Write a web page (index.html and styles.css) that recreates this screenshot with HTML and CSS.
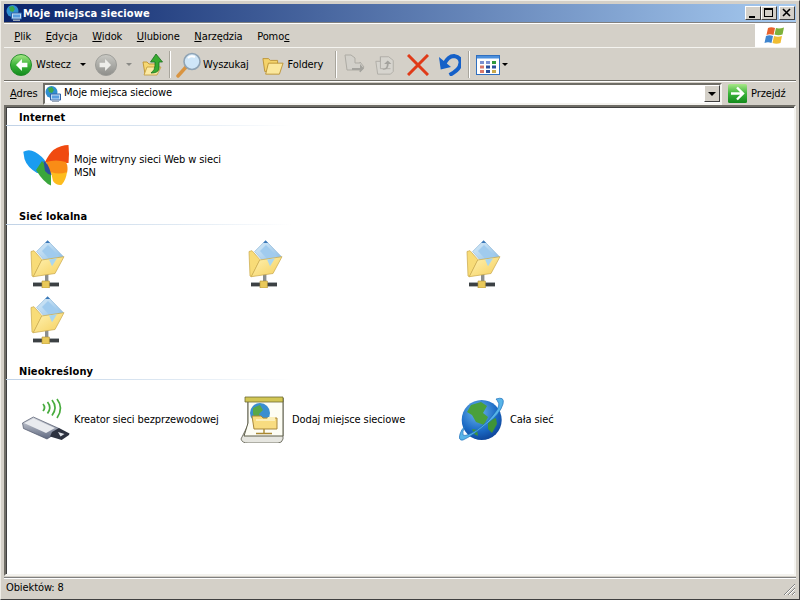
FILE: index.html
```html
<!DOCTYPE html>
<html lang="pl">
<head>
<meta charset="utf-8">
<title>Moje miejsca sieciowe</title>
<link rel="stylesheet" href="styles.css">
</head>
<body>
<svg class="defs" width="0" height="0" aria-hidden="true">
  <defs>
    <linearGradient id="gGreen" x1="0" y1="0" x2="0" y2="1"><stop offset="0" stop-color="#a8e888"/><stop offset="0.5" stop-color="#3cb43a"/><stop offset="1" stop-color="#128a1c"/></linearGradient>
    <linearGradient id="gGray" x1="0" y1="0" x2="0" y2="1"><stop offset="0" stop-color="#c9c9c4"/><stop offset="1" stop-color="#8e8e8a"/></linearGradient>
    <linearGradient id="gYel" x1="0" y1="0" x2="1" y2="1"><stop offset="0" stop-color="#fff3b4"/><stop offset="1" stop-color="#f5cf5c"/></linearGradient>
    <linearGradient id="gBlueDoc" x1="0" y1="0" x2="1" y2="1"><stop offset="0" stop-color="#dcedf9"/><stop offset="1" stop-color="#82b8e4"/></linearGradient>
    <radialGradient id="gGlobe" cx="0.4" cy="0.3" r="0.8"><stop offset="0" stop-color="#6fb8ee"/><stop offset="0.6" stop-color="#1a69c4"/><stop offset="1" stop-color="#0b3a8c"/></radialGradient>
    <linearGradient id="gUsb" x1="0" y1="0" x2="0" y2="1"><stop offset="0" stop-color="#d5d8de"/><stop offset="1" stop-color="#5f6880"/></linearGradient>
    <symbol id="netFolder" viewBox="0 0 48 48">
      <path d="M23 32h3.400v10H23z" fill="#8b8f90"/>
      <path d="M11 43h26v3.400H11z" fill="#3c4144"/>
      <path d="M11 42.500h26" stroke="#a8adb0" fill="none"/>
      <path d="M20 41h7.400v7H20z" fill="#e9c95a" stroke="#b0923a" stroke-width=".6"/>
      <path d="M9 11.500l3-.8 8 9-8.700 17L10 36z" fill="#f8dc78" stroke="#c9a84a" stroke-width=".7"/>
      <path d="M25.600 .5 41.300 16.600 28 26.600 14.600 11.600z" fill="url(#gBlueDoc)" stroke="#8fb8d8" stroke-width=".7"/>
      <path d="M25.600 .5l2.600 2.500h-5z" fill="#3c78b8"/>
      <path d="M20 11l6-6 11 11-7 6z" fill="#a0cbee"/>
      <path d="M11.300 36.700 33 33.500 42 16.700 19.700 20z" fill="url(#gYel)" stroke="#c9a84a" stroke-width=".7"/>
      <path d="M27 19.500l8-1.200-5 8z" fill="#a9d6ef"/>
    </symbol>
    <symbol id="netGlobe" viewBox="0 0 16 16">
      <circle cx="6.500" cy="6" r="6" fill="#2f8fd0"/>
      <path d="M3 2l4-1 2 3-2 3-3-1z" fill="#3fa84a"/>
      <path d="M5.500 8h10v6h-10z" fill="#c4def4" stroke="#2f62a8"/>
      <path d="M7 9.500h7v3H7z" fill="#5a9ee0"/>
      <path d="M7 14.500h7V16H7z" fill="#9aa8b8"/>
    </symbol>
  </defs>
</svg>
<div class="window">
  <header class="titlebar">
    <svg class="ico16"><use href="#netGlobe"/></svg>
    <span class="title-text">Moje miejsca sieciowe</span>
    <div class="caption-buttons">
      <span class="cap-btn"><svg viewBox="0 0 14 12" width="14" height="12"><path d="M3 9h6v2H3z"/></svg></span>
      <span class="cap-btn"><svg viewBox="0 0 14 12" width="14" height="12"><path d="M2 1h9v9H2zM3 3v6h7V3z" fill-rule="evenodd"/></svg></span>
      <span class="cap-btn cap-close"><svg viewBox="0 0 14 12" width="14" height="12"><path d="M3 2l7 7M10 2 3 9" stroke="#000" stroke-width="1.600" fill="none"/></svg></span>
    </div>
  </header>
  <div class="menubar">
    <nav class="menu">
      <span class="menu-item"><u>P</u>lik</span>
      <span class="menu-item"><u>E</u>dycja</span>
      <span class="menu-item"><u>W</u>idok</span>
      <span class="menu-item"><u>U</u>lubione</span>
      <span class="menu-item"><u>N</u>arzędzia</span>
      <span class="menu-item">Pomo<u>c</u></span>
    </nav>
    <div class="brand">
      <svg width="22" height="20" viewBox="0 0 22 20"><path d="M4 2q3-1.500 7 0l-1.500 7q-3.500-1.500-7 0z" fill="#e8622c"/><path d="M12 2q3 1.200 8-.5L18.500 8.500q-4 1.500-8 0z" fill="#7cb13a"/><path d="M2 10q3.500-1.500 7 0L7.500 17q-3.500-1.500-7 0z" fill="#3f85cf"/><path d="M10 10q4 1.500 8 0l-1.500 7q-4 1.500-8 0z" fill="#f0bd32"/></svg>
    </div>
  </div>
  <div class="toolbar">
    <svg class="tb-round" viewBox="0 0 24 24"><circle cx="12" cy="12" r="11.500" fill="url(#gGreen)" stroke="#1c8a24"/><path d="M13 5.500 6.500 12l6.500 6.500v-4h6v-5h-6z" fill="#fff"/></svg>
    <span class="tb-label lbl-back">Wstecz</span>
    <span class="caret caret-back"></span>
    <svg class="tb-round tb-forward" viewBox="0 0 24 24"><circle cx="12" cy="12" r="11.500" fill="url(#gGray)" stroke="#9a9a96"/><path d="M11 5.500 17.500 12 11 18.500v-4H5v-5h6z" fill="#eeeeea"/></svg>
    <span class="caret caret-fwd"></span>
    <svg class="tb-ico tb-up" viewBox="0 0 22 22"><path d="M1 8h4l2 2h7v10H3z" fill="#f6d873" stroke="#c29a3b"/><path d="M2 21l3-8h14l-4 8z" fill="#fbe9a4" stroke="#c29a3b" stroke-width=".8"/><path d="M14 0l6.500 8H17v7q-1 4-8 4 4-3 4-7V8H8.500z" fill="#38ab30" stroke="#17701c" stroke-width=".8"/></svg>
    <span class="tb-sep sep-a"></span>
    <svg class="tb-search" viewBox="0 0 26 26"><path d="M2 24l8-9" stroke="#d99440" stroke-width="3.400" stroke-linecap="round"/><circle cx="16" cy="9.500" r="8" fill="#cfe6f8" stroke="#8fa3b4" stroke-width="1.600"/><path d="M12 6q3-3 7-1" stroke="#fff" stroke-width="2" fill="none"/></svg>
    <span class="tb-label lbl-search">Wyszukaj</span>
    <svg class="tb-ico tb-folders" viewBox="0 0 24 24"><path d="M1 5h6l2 2h8v12H3z" fill="#f4d36b" stroke="#bb9336"/><path d="M4 22 7 10h16l-4 12z" fill="#fbe79c" stroke="#bb9336"/></svg>
    <span class="tb-label lbl-folders">Foldery</span>
    <span class="tb-sep sep-b"></span>
    <svg class="tb-ico tb-move" viewBox="0 0 22 22"><path d="M2 1h6l4 3v5h5v-1l4 5-4 5v-2H4z" fill="#d2d0ca" stroke="#adaba4"/><path d="M9 14h8v-4l4 4.500-4 4v-2.500H9z" fill="#a4a39e"/></svg>
    <svg class="tb-ico tb-copy" viewBox="0 0 24 24"><path d="M2 8h5V3h9l5 4v12l-3 3H4z" fill="#d6d4ce" stroke="#aeaca5"/><path d="M7 3v13h11" fill="none" stroke="#aeaca5"/><path d="M9 17c4-1 5-3 5-6h-3l4-4 4 4h-3q0 7-7 6z" fill="#a4a39e"/></svg>
    <svg class="tb-ico tb-del" viewBox="0 0 22 22"><path d="M1 1l20 20M21 1 1 21" stroke="#e03a18" stroke-width="3" fill="none"/></svg>
    <svg class="tb-ico tb-undo" viewBox="0 0 22 22"><path d="M5 10.500Q9 2 15 2q7 1 6.500 7-.5 7-11 12" fill="none" stroke="#1560c8" stroke-width="4"/><path d="M0 3l1.700 12.500L12 13z" fill="#1560c8"/></svg>
    <span class="tb-sep sep-c"></span>
    <svg class="tb-views" viewBox="0 0 24 20"><rect x=".5" y=".5" width="23" height="19" fill="#fff" stroke="#2f6fc0"/><path d="M1 1h22v2.500H1z" fill="#4c8fdc"/><path d="M4 6h4v3H4z" fill="#7b8fd0"/><path d="M10 6h4v3h-4z" fill="#7b8fd0"/><path d="M16 6h4v3h-4z" fill="#2f9a3c"/><path d="M4 10.500h4v3H4z" fill="#d9776a"/><path d="M10 10.500h4v3h-4z" fill="#2a4f9c"/><path d="M16 10.500h4v3h-4z" fill="#2a4f9c"/><path d="M4 15h4v3H4z" fill="#d9776a"/><path d="M10 15h4v3h-4z" fill="#2a4f9c"/><path d="M16 15h4v3h-4z" fill="#c9a84a"/></svg>
    <span class="caret caret-views"></span>
  </div>
  <div class="addressbar">
    <span class="addr-label"><u>A</u>dres</span>
    <div class="combo">
      <svg class="ico16"><use href="#netGlobe"/></svg>
      <span class="combo-text">Moje miejsca sieciowe</span>
      <span class="combo-btn"><span class="caret caret-combo"></span></span>
    </div>
    <svg class="go-ico" viewBox="0 0 19 19"><rect width="19" height="19" rx="1.500" fill="url(#gGreen)"/><path d="M9 3.500 15 9.500 9 15.500M3 9.500h11" stroke="#fff" stroke-width="2.400" fill="none"/></svg>
    <span class="go-label">Przejdź</span>
  </div>
  <main class="content">
    <section class="group group-first">
      <h2 class="group-head">Internet</h2>
      <div class="items">
        <div class="item">
          <svg class="big" viewBox="0 0 48 48"><path d="M1.300 9.700Q7 6.500 13 10 20 14 24 20L22 31H15Q5 25 2.500 17z" fill="#1a9cf0"/><path d="M14 28 20 19 29 29 29 43.500Q22 41 14 28z" fill="#3aa63c"/><path d="M23 20Q27 12 31.300 8 39 3 46.500 3 47.500 12 46.500 21H28z" fill="#f04a10"/><path d="M24 20Q34 17 44 20 46.500 25 45 31 36 34 28 31z" fill="#f98c16"/><path d="M29 30Q37 33 45 30 44 38 39.700 42.800 34 43.500 31 39z" fill="#fdbc1e"/><path d="M21.500 19Q26 20 29.500 33 25 32 23 29z" fill="#2a4f9c"/></svg>
          <span class="label">Moje witryny sieci Web w sieci MSN</span>
        </div>
      </div>
    </section>
    <section class="group">
      <h2 class="group-head">Sieć lokalna</h2>
      <div class="items">
        <div class="item"><svg class="big"><use href="#netFolder"/></svg></div>
        <div class="item"><svg class="big"><use href="#netFolder"/></svg></div>
        <div class="item"><svg class="big"><use href="#netFolder"/></svg></div>
        <div class="item"><svg class="big"><use href="#netFolder"/></svg></div>
      </div>
    </section>
    <section class="group">
      <h2 class="group-head">Nieokreślony</h2>
      <div class="items">
        <div class="item">
          <svg class="big" viewBox="0 0 48 48"><path d="M.5 28 11.300 22 37 33.500 36 37 25 44 1.500 33.500z" fill="url(#gUsb)" stroke="#4f566a" stroke-width=".7"/><path d="M2 28 11.500 23.500 33 33 24 38z" fill="#e9ebef"/><path d="M30 37 37 33 47.500 38.500 47 40 39.700 45 28 41.500z" fill="#2d3240"/><path d="M36 37 42.500 39 38.500 41.500z" fill="#dfe2e8"/><g fill="none" stroke="#48ac3e" stroke-width="1.700"><path d="M21 9Q24 12.500 21 16"/><path d="M25.500 7Q30 12.500 25.500 18.500"/><path d="M30 5Q36 12.500 30 20.500"/><path d="M35 4Q42 13 35 23"/></g></svg>
          <span class="label">Kreator sieci bezprzewodowej</span>
        </div>
        <div class="item">
          <svg class="big" viewBox="0 0 48 48"><path d="M1 44 8 30V3h35v41q-1 4-5 4H8q-6 0-7-4z" fill="#e6e6e0" stroke="#77776a"/><path d="M4 41 8 28V3h35v38z" fill="#fdfdf4" stroke="#5c5c48" stroke-width="1"/><path d="M5 2h38v5H5z" fill="#d2c654" stroke="#6d6a30" stroke-width=".8"/><circle cx="20" cy="18" r="10" fill="#3a8ed0"/><path d="M13 13l7-3 3 5-4 4 2 6-4 1-4-7z" fill="#58a848"/><path d="M12 21h9l2 2h14v11H14z" fill="#f8dc80" stroke="#a8873a"/><path d="M16 24h11l1-2h7v4H16z" fill="#fbeeb8"/><path d="M24 34v4M16 38.500h16" stroke="#a98830" stroke-width="1.400"/></svg>
          <span class="label">Dodaj miejsce sieciowe</span>
        </div>
        <div class="item">
          <svg class="big" viewBox="0 0 48 48"><circle cx="23.700" cy="25" r="20" fill="url(#gGlobe)"/><path d="M13 10l10-3 6 4-4 7 5 4-4 8-8-3-4-7-5-3z" fill="#4aa03c"/><path d="M30 26l8-3 1 6-5 9-4-4z" fill="#3f9438"/><path d="M14 34l5 1 1 6-4-2z" fill="#3f9438"/><path d="M38 4q9-3 7 5-3 10-15 19Q14 41 5 45q-5 1-3-6 1-4 5-8-3 6-2 9 3 2 14-5Q32 26 39 15q3-6 1-8-1-2-2-3z" fill="#58b4e8" stroke="#1c70bc" stroke-width=".7"/></svg>
          <span class="label">Cała sieć</span>
        </div>
      </div>
    </section>
  </main>
  <footer class="statusbar">
    <span>Obiektów: 8</span>
    <svg class="grip" width="14" height="14" viewBox="0 0 14 14"><g fill="none" stroke-width="1"><path d="M13 2 2 13M13 6 6 13M13 10l-3 3" stroke="#808080"/><path d="M13 3 3 13M13 7l-6 6M13 11l-2 2" stroke="#fff"/></g></svg>
  </footer>
</div>
</body>
</html>
```
FILE: styles.css
```css
* { box-sizing: border-box; }
html, body { margin: 0; padding: 0; }
body {
  width: 800px;
  height: 600px;
  overflow: hidden;
  font-family: "DejaVu Sans Condensed", "DejaVu Sans", sans-serif;
  font-size: 11px;
  letter-spacing: -0.1px;
  color: #000;
  background: #d4d0c8;
}
.defs { position: absolute; }
.window {
  width: 800px;
  height: 600px;
  display: flex;
  flex-direction: column;
  background: #d4d0c8;
  border: 1px solid;
  border-color: #f0eee8 #404040 #404040 #f0eee8;
  padding: 3px;
}
.titlebar {
  flex: none;
  height: 18px;
  display: flex;
  align-items: center;
  gap: 1px;
  padding-left: 2px;
  background: linear-gradient(90deg, #0a246a, #a6caf0);
}
.ico16 { width: 16px; height: 16px; flex: none; }
.title-text { color: #fff; font-weight: bold; font-size: 11px; letter-spacing: 0.15px; }
.caption-buttons { margin-left: auto; display: flex; margin-right: 1px; }
.cap-btn {
  width: 16px;
  height: 14px;
  background: #d4d0c8;
  border: 1px solid;
  border-color: #fff #404040 #404040 #fff;
  display: flex;
}
.cap-btn svg { display: block; width: 14px; height: 12px; }
.cap-close { margin-left: 2px; }
.menubar {
  flex: none;
  height: 25px;
  margin-top: 1px;
  display: flex;
  border-top: 1px solid #fff;
  border-bottom: 1px solid #f4f3ef;
  box-shadow: 0 -1px 0 #808080;
}
.menu { display: flex; align-items: center; padding: 2px 0 0 3px; flex: 1; }
.menu-item { padding: 0 7.3px; }
.brand {
  width: 41px;
  background: #fff;
  display: flex;
  align-items: center;
  padding-left: 9px;
}
.toolbar {
  flex: none;
  height: 32px;
  margin-top: 1px;
  display: flex;
  align-items: center;
  border-bottom: 1px solid #6f6d66;
  padding-left: 6px;
}
.tb-round { width: 22px; height: 22px; flex: none; }
.tb-label { flex: none; }
.tb-ico { width: 22px; height: 22px; flex: none; }
.tb-search { width: 26px; height: 26px; flex: none; margin-left: 5px; }
.tb-views { width: 24px; height: 20px; flex: none; margin-left: 6px; }
.tb-sep {
  flex: none;
  width: 2px;
  height: 27px;
  background: #a8a59c;
  border-right: 1px solid #fff;
}
.caret {
  flex: none;
  display: inline-block;
  width: 0;
  height: 0;
  border-left: 3px solid transparent;
  border-right: 3px solid transparent;
  border-top: 3px solid #000;
}
.caret-combo {
  border-left-width: 4px;
  border-right-width: 4px;
  border-top-width: 4px;
}
.lbl-back { margin-left: 4px; }
.caret-back { margin-left: 9px; }
.tb-forward { margin-left: 9px; }
.caret-fwd { margin-left: 9px; border-top-color: #8a8a86; }
.tb-up { margin-left: 10px; }
.sep-a { margin-left: 5px; }
.lbl-search { margin-left: 1px; }
.tb-folders { margin-left: 13px; }
.lbl-folders { margin-left: 4px; }
.sep-b { margin-left: 12px; }
.tb-move { margin-left: 6px; }
.tb-copy { margin-left: 9px; }
.tb-del { margin-left: 11px; }
.tb-undo { margin-left: 10px; }
.sep-c { margin-left: 7px; }
.caret-views { margin-left: 2px; }
.addressbar {
  flex: none;
  height: 24px;
  display: flex;
  align-items: center;
  border-top: 1px solid #fff;
  padding-left: 6px;
}
.addr-label { flex: none; width: 33px; }
.combo {
  flex: none;
  width: 679px;
  height: 22px;
  background: #fff;
  border: 2px solid;
  border-color: #6f6d66 #f4f3ef #f4f3ef #6f6d66;
  display: flex;
  align-items: center;
  gap: 3px;
}
.combo-text { padding-bottom: 2px; }
.combo-btn {
  margin-left: auto;
  width: 16px;
  height: 17px;
  background: #d4d0c8;
  border: 1px solid;
  border-color: #fff #404040 #404040 #fff;
  display: flex;
  align-items: center;
  justify-content: center;
}
.go-ico { width: 19px; height: 19px; flex: none; margin-left: 6px; }
.go-label { margin-left: 4px; }
.content {
  flex: 1;
  min-height: 0;
  background: #fff;
  border: 2px solid;
  border-color: #6f6d66 #f4f3ef #f4f3ef #6f6d66;
  box-shadow: inset 1px 1px 0 #404040;
}
.group { padding-bottom: 13px; }
.group-first { padding-bottom: 12px; }
.group-head {
  margin: 0;
  height: 19px;
  padding: 4px 0 0 13px;
  font-size: 11px;
  font-weight: bold;
  line-height: 13px;
  letter-spacing: 0.1px;
  border-bottom: 1px solid;
  border-image: linear-gradient(90deg, #c0d2e6, #dfe9f3 60%, #fff) 1;
  width: 285px;
  white-space: nowrap;
}
.items {
  display: flex;
  flex-wrap: wrap;
  padding: 11px 0 0 16px;
}
.group-first .items { padding-top: 12px; }
.item {
  width: 218px;
  height: 56px;
  display: flex;
  align-items: center;
  gap: 4px;
}
.big { width: 48px; height: 48px; flex: none; }
.label { width: 150px; line-height: 13px; }
.statusbar {
  flex: none;
  height: 19px;
  margin-top: 1px;
  border-top: 1px solid #808080;
  box-shadow: inset 0 1px 0 #fff;
  display: flex;
  align-items: center;
  padding: 1px 0 0 2px;
  position: relative;
}
.grip { position: absolute; right: 0; bottom: 0; }
```
